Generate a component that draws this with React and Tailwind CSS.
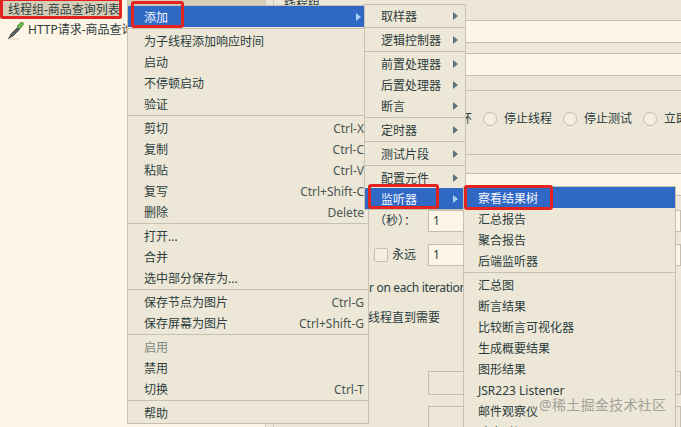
import { Fragment } from "react";

const FONT = "font-['Noto_Sans','Noto_Sans_CJK_SC',sans-serif]";

const addMenu = [
  [{ label: "添加", active: true, arrow: true }],
  [
    { label: "为子线程添加响应时间" },
    { label: "启动" },
    { label: "不停顿启动" },
    { label: "验证" },
  ],
  [
    { label: "剪切", key: "Ctrl-X" },
    { label: "复制", key: "Ctrl-C" },
    { label: "粘贴", key: "Ctrl-V" },
    { label: "复写", key: "Ctrl+Shift-C" },
    { label: "删除", key: "Delete" },
  ],
  [{ label: "打开..." }, { label: "合并" }, { label: "选中部分保存为..." }],
  [
    { label: "保存节点为图片", key: "Ctrl-G" },
    { label: "保存屏幕为图片", key: "Ctrl+Shift-G" },
  ],
  [{ label: "启用", disabled: true }, { label: "禁用" }, { label: "切换", key: "Ctrl-T" }],
  [{ label: "帮助" }],
];

const elementMenu = [
  [{ label: "取样器", arrow: true }],
  [{ label: "逻辑控制器", arrow: true }],
  [
    { label: "前置处理器", arrow: true },
    { label: "后置处理器", arrow: true },
    { label: "断言", arrow: true },
  ],
  [{ label: "定时器", arrow: true }],
  [{ label: "测试片段", arrow: true }],
  [
    { label: "配置元件", arrow: true },
    { label: "监听器", arrow: true, active: true },
  ],
];

const listenerMenu = [
  [
    { label: "察看结果树", active: true },
    { label: "汇总报告" },
    { label: "聚合报告" },
    { label: "后端监听器" },
  ],
  [
    { label: "汇总图" },
    { label: "断言结果" },
    { label: "比较断言可视化器" },
    { label: "生成概要结果" },
    { label: "图形结果" },
    { label: "JSR223 Listener" },
    { label: "邮件观察仪" },
    { label: "响应时间图" },
  ],
];

function MenuItem({ item, padLeft }) {
  const tone = item.active
    ? "bg-[#3068c6] text-[#f4f6fb]"
    : item.disabled
      ? "text-[#7d8580]"
      : "text-[#2c3d3d]";
  return (
    <div className={`flex h-[21px] shrink-0 items-center pr-[4px] text-[12px] ${padLeft} ${tone}`}>
      <span className="flex-1 whitespace-nowrap pt-[2px]">{item.label}</span>
      {item.key && <span className="whitespace-nowrap pt-[2px] text-[#4a5654]">{item.key}</span>}
      {item.arrow && (
        <span
          className={`mr-[3px] h-0 w-0 border-y-[4px] border-l-[5px] border-y-transparent ${
            item.active ? "border-l-[#a5d4f2]" : "border-l-[#5d7480]"
          }`}
        />
      )}
    </div>
  );
}

function Menu({ groups, className, padLeft }) {
  return (
    <div className={`absolute flex flex-col overflow-hidden border border-[#c6c1b0] bg-[#ece7d7] ${className}`}>
      {groups.map((group, i) => (
        <Fragment key={i}>
          {i > 0 && <div className="my-[1px] h-px shrink-0 bg-[#c6c1b0]" />}
          {group.map((item) => (
            <MenuItem key={item.label} item={item} padLeft={padLeft} />
          ))}
        </Fragment>
      ))}
    </div>
  );
}

function Field() {
  return <div className="h-[23px] border-y border-[#c4bfae] bg-[#fdf5e6]" />;
}

function Radio({ label }) {
  return (
    <div className="flex items-center gap-[7px]">
      <span className="h-[14px] w-[14px] rounded-full border border-[#c4bfae] bg-[#f4efe2]" />
      <span className="w-[59px] whitespace-nowrap">{label}</span>
    </div>
  );
}

function PipetteIcon() {
  return (
    <svg width="20" height="20" viewBox="0 0 20 20">
      <path d="M3 19 H14" stroke="#d8d2c0" strokeWidth="1" />
      <path d="M5.5 14.5 L13 7 L15 9 L7.5 16.5 L5 17 Z" fill="#5a6468" stroke="#33393b" strokeWidth="0.8" />
      <path d="M5 17 L3.5 18.5" stroke="#33393b" strokeWidth="1.2" />
      <path d="M12 6 L15.5 2.5 Q17.5 1.5 18.5 3 Q19 4.5 17.5 6 L14.5 9.5 Z" fill="#6fb24e" stroke="#4c8a36" strokeWidth="0.6" />
    </svg>
  );
}

export default function App() {
  return (
    <div className={`relative flex h-[427px] w-[681px] overflow-hidden bg-[#ece7d7] ${FONT} text-[12px] text-[#2c3d3d]`}>
      {/* Tree */}
      <div className="w-[265px] shrink-0 bg-[#fdf5e6]">
        <div className="flex h-[19px]">
          <div className="flex w-[122px] items-center bg-[#d6cdb9] pl-[8px] pt-[1px]">
            <span className="whitespace-nowrap">线程组-商品查询列表</span>
          </div>
          <div className="ml-[5px] h-[6px] flex-1 bg-[#d6cdb9]" />
        </div>
        <div className="flex h-[22px] items-center gap-[3px] pl-[5px]">
          <PipetteIcon />
          <span className="whitespace-nowrap">HTTP请求-商品查询</span>
        </div>
      </div>

      {/* Divider */}
      <div className="w-[9px] shrink-0 border-x border-[#cfcaba] bg-[#ece7d7]" />

      {/* Settings panel */}
      <div className="min-w-0 flex-1">
        <div className="h-[20px] pl-[10px] leading-[7px]">线程组</div>
        <Field />
        <div className="h-[10px]" />
        <Field />
        <div className="h-[14px]" />

        <div className="flex h-[65px] items-center border-y border-[#c4bfae] pb-[8px] pl-[102px] whitespace-nowrap">
          <span className="mr-[11px]">启动下一进程循环</span>
          <Radio label="停止线程" />
          <Radio label="停止测试" />
          <Radio label="立即停止测试线程" />
        </div>

        <div className="h-[18px]" />
        <Field />
        <div className="h-[14px]" />

        <div className="flex h-[22px] items-center pl-[100px]">
          <span className="w-[54px] whitespace-nowrap">（秒）：</span>
          <div className="flex h-full flex-1 items-center border border-[#c4bfae] bg-[#fdf5e6] pl-[4px]">1</div>
        </div>
        <div className="h-[12px]" />
        <div className="flex h-[22px] items-center pl-[100px]">
          <span className="h-[14px] w-[14px] rounded-[2px] border border-[#c4bfae] bg-[#f4efe2]" />
          <span className="ml-[4px] w-[36px] whitespace-nowrap">永远</span>
          <div className="flex h-full flex-1 items-center border border-[#c4bfae] bg-[#fdf5e6] pl-[4px]">1</div>
        </div>

        <div className="mt-[11px] h-[22px] whitespace-nowrap pl-[43px] leading-[22px] tracking-[-0.3px]">
          Same user on each iteration
        </div>
        <div className="mt-[8px] h-[22px] whitespace-nowrap pl-[94px] leading-[22px]">线程直到需要</div>

        <div className="mt-[42px] flex h-[24px] pl-[154px]">
          <div className="flex-1 border border-[#c4bfae]" />
        </div>
        <div className="mt-[11px] flex h-[24px] pl-[154px]">
          <div className="flex-1 border border-[#c4bfae]" />
        </div>
      </div>

      {/* Context menus */}
      <Menu groups={addMenu} className="left-[127px] top-[5px] h-[419px] w-[242px]" padLeft="pl-[16px]" />
      <Menu groups={elementMenu} className="left-[364px] top-[4px] h-[206px] w-[102px]" padLeft="pl-[16px]" />
      <Menu groups={listenerMenu} className="left-[463px] top-[186px] h-[260px] w-[213px]" padLeft="pl-[14px]" />

      {/* Red annotation boxes */}
      <div className="absolute left-0 top-[-2px] h-[21px] w-[122px] rounded-[3px] border-[3px] border-[#e3231f]" />
      <div className="absolute left-[131px] top-[1px] h-[27px] w-[53px] rounded-[3px] border-[3px] border-[#e3231f]" />
      <div className="absolute left-[368px] top-[184px] h-[25px] w-[71px] rounded-[3px] border-[3px] border-[#e3231f]" />
      <div className="absolute left-[464px] top-[185px] h-[25px] w-[89px] rounded-[3px] border-[3px] border-[#e3231f]" />

      {/* Watermark */}
      <div className="absolute left-[539px] top-[395px] whitespace-nowrap text-[14px] leading-[20px] tracking-[0.3px] text-[#a3a19a]">
        @稀土掘金技术社区
      </div>
    </div>
  );
}
